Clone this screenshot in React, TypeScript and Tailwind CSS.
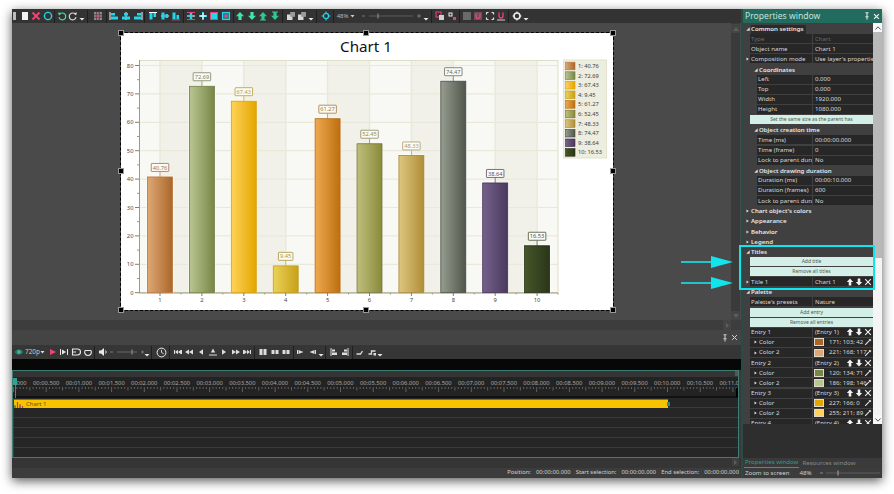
import type { ReactNode } from "react";

const font = "font-['Noto_Sans','Liberation_Sans',sans-serif]";

function I({ children, size = 10 }: { children: ReactNode; size?: number }) {
  return (
    <svg width={size} height={size} viewBox="0 0 10 10" className="block">
      {children}
    </svg>
  );
}

function Slot({ children }: { children: ReactNode }) {
  return <span className="w-[11.6px] shrink-0 flex justify-center items-center">{children}</span>;
}

const Caret = () => (
  <svg width="6" height="10" viewBox="0 0 6 10" className="block shrink-0">
    <path d="M0.5 7h5L3 9.5z" fill="#e8e8e8" />
  </svg>
);

const Up = ({ c = "#3ee6a8" }: { c?: string }) => <path d="M5 1L9 5.2H6.6V9H3.4V5.2H1z" fill={c} />;
const Down = ({ c = "#3ee6a8" }: { c?: string }) => <path d="M5 9L9 4.8H6.6V1H3.4V4.8H1z" fill={c} />;
const Cross = ({ c = "#f5f5f5", w = 1.6 }: { c?: string; w?: number }) => (
  <path d="M1.5 1.5L8.5 8.5M8.5 1.5L1.5 8.5" stroke={c} strokeWidth={w} fill="none" />
);

// alignment style buttons of the top toolbar
const Align = ({ v }: { v: number }) => {
  const bars: Record<number, ReactNode> = {
    0: (<><path d="M1 1v8" stroke="#fff" /><rect x="2" y="2" width="4" height="2.5" fill="#25d4ea" /><rect x="2" y="5.5" width="7" height="3" fill="#25d4ea" /></>),
    1: (<><path d="M5 1v8" stroke="#fff" /><rect x="3" y="2" width="4" height="2.5" fill="#25d4ea" /><rect x="1" y="5.5" width="8" height="3" fill="#25d4ea" /></>),
    2: (<><path d="M9 1v8" stroke="#fff" /><rect x="4" y="2" width="4" height="2.5" fill="#25d4ea" /><rect x="1" y="5.5" width="7" height="3" fill="#25d4ea" /></>),
    3: (<><path d="M1 1.5h8" stroke="#fff" /><rect x="1.5" y="2" width="3" height="6.5" fill="#25d4ea" /><rect x="5.5" y="2" width="2.5" height="4" fill="#25d4ea" /></>),
    4: (<><path d="M1 5h8" stroke="#fff" /><rect x="1.5" y="1.5" width="3" height="7" fill="#25d4ea" /><rect x="5.5" y="3" width="2.5" height="4" fill="#25d4ea" /></>),
    5: (<><path d="M1 8.8h8" stroke="#e0447a" /><rect x="1.5" y="1.5" width="3" height="6.5" fill="#25d4ea" /><rect x="5.5" y="4" width="2.5" height="4" fill="#25d4ea" /></>),
  };
  return <I>{bars[v]}</I>;
};

const Overlap = () => (
  <I>
    <rect x="1" y="3.5" width="5.5" height="5.5" fill="#d8d8d8" />
    <rect x="4.2" y="1" width="4.8" height="4.8" fill="#9a9a9a" />
  </I>
);

function Sep({ className }: { className: string }) {
  return <span className={`w-px h-[13px] bg-[#1f1f1f] shrink-0 ${className}`} />;
}

function TopToolbar() {
  return (
    <div className={`h-[14px] bg-[#333333] flex items-center shrink-0 overflow-hidden ${font}`}>
      <span className="w-[3px] ml-[1px] mr-[3px] h-[8px] bg-[#bdbdbd] shrink-0" />
      <Slot><I><rect x="2" y="1" width="6" height="8" fill="#f2f2f2" /></I></Slot>
      <Slot><I><Cross c="#f0436f" w={2} /></I></Slot>
      <Slot><I><circle cx="5" cy="5" r="3.6" stroke="#25d4ea" strokeWidth="1.4" fill="none" /></I></Slot>
      <Sep className="ml-[0px] mr-[1px]" />
      <Slot><I><path d="M2.5 3.5A3.4 3.4 0 1 1 2 6.2" stroke="#3ee6a8" strokeWidth="1.2" fill="none" /><path d="M1 1.5l3.4.6-2.4 2.5z" fill="#3ee6a8" /></I></Slot>
      <Slot><I><path d="M7.5 3.5A3.4 3.4 0 1 0 8 6.2" stroke="#d8d8d8" strokeWidth="1.2" fill="none" /><path d="M9 1.5l-3.4.6 2.4 2.5z" fill="#d8d8d8" /></I></Slot>
      <Caret />
      <Sep className="ml-[2px] mr-[4px]" />
      <Slot>
        <I>
          <path d="M1 1h8v8H1z" fill="#8c8c8c" />
          <path d="M3.7 1v8M6.3 1v8M1 3.7h8M1 6.3h8" stroke="#333" strokeWidth="0.7" />
          <rect x="3.6" y="3.6" width="2.8" height="2.8" fill="#f0436f" />
        </I>
      </Slot>
      <Sep className="ml-[2px] mr-[2px]" />
      <Slot><Align v={0} /></Slot>
      <Slot><Align v={1} /></Slot>
      <Slot><Align v={2} /></Slot>
      <Sep className="ml-[1px] mr-[2px]" />
      <Slot><Align v={3} /></Slot>
      <Slot><Align v={4} /></Slot>
      <Slot><Align v={5} /></Slot>
      <Sep className="ml-[1px] mr-[1px]" />
      <Slot><I><path d="M1 5h8" stroke="#fff" /><path d="M5 1v8" stroke="#25d4ea" strokeWidth="2.4" /><path d="M1 1.5h8M1 8.5h8" stroke="#e0447a" /></I></Slot>
      <Slot><I><path d="M1 5h8M5 1v8" stroke="#25d4ea" strokeWidth="2" /><path d="M2 5h6M5 2v6" stroke="#fff" /></I></Slot>
      <Slot><I><rect x="1.5" y="1.5" width="7" height="7" fill="#25d4ea" stroke="#e0447a" /></I></Slot>
      <Slot><I><rect x="1.5" y="1.5" width="7" height="7" fill="#1c7f8d" stroke="#25d4ea" strokeWidth="1.2" /><rect x="3.5" y="3.5" width="3" height="3" fill="#f0436f" /></I></Slot>
      <Sep className="ml-[1px] mr-[1px]" />
      <Slot><I><Up /></I></Slot>
      <Slot><I><Down /></I></Slot>
      <Slot><I><Up c="#2ec795" /><path d="M2 9h6" stroke="#2ec795" /></I></Slot>
      <Slot><I><Down c="#2ec795" /><path d="M2 1h6" stroke="#2ec795" /></I></Slot>
      <Sep className="ml-[1px] mr-[2px]" />
      <Slot><Overlap /></Slot>
      <Slot><Overlap /></Slot>
      <Caret />
      <Sep className="ml-[2px] mr-[3px]" />
      <Slot>
        <I>
          <circle cx="5" cy="5" r="2.6" stroke="#25d4ea" strokeWidth="1.3" fill="none" />
          <path d="M5 0.5v2.2M5 7.3v2.2M0.5 5h2.2M7.3 5h2.2" stroke="#25d4ea" strokeWidth="1.1" />
        </I>
      </Slot>
      <Sep className="ml-[1px] mr-[3px]" />
      <span className="text-[6px] leading-none text-[#b8b8b8] w-[13px] shrink-0">48%</span>
      <svg width="5" height="10" viewBox="0 0 5 10" className="shrink-0"><path d="M0.5 4h4L2.5 6.5z" fill="#cfcfcf" /></svg>
      <svg width="62" height="10" viewBox="0 0 62 10" className="shrink-0 ml-[6px]">
        <path d="M1 5h3M56 5h4M58 3v4" stroke="#777" />
        <path d="M8 5h44" stroke="#5c5c5c" />
        <path d="M17 2.5v5" stroke="#8a8a8a" strokeWidth="1.2" />
      </svg>
      <Caret />
      <Sep className="ml-[2px] mr-[3px]" />
      <Slot><I><rect x="1" y="1" width="5" height="5" fill="none" stroke="#e0447a" strokeWidth="1.1" /><rect x="4" y="4" width="5" height="5" fill="#cfcfcf" /></I></Slot>
      <Slot><I><rect x="2" y="2" width="3" height="3" fill="none" stroke="#f0f0f0" /><rect x="6" y="6" width="3" height="3" fill="#e0447a" /></I></Slot>
      <Sep className="ml-[1px] mr-[1px]" />
      <Slot><span className="block w-[8px] h-[8px] bg-[#6a6a6a]" /></Slot>
      <Slot><I><rect x="1" y="1" width="8" height="8" fill="#6b5060" /><path d="M3 2.5v3a2 2 0 0 0 4 0v-3" stroke="#f0436f" strokeWidth="1.2" fill="none" /></I></Slot>
      <Slot><I><path d="M1.5 1.5h2M6.5 1.5h2M1.5 8.5h2M6.5 8.5h2M1.5 1.5v2M8.5 1.5v2M1.5 6.5v2M8.5 6.5v2" stroke="#e8e8e8" strokeWidth="1.2" /></I></Slot>
      <Slot><I><path d="M3 1.5v3.5a2 2 0 0 0 4 0V1.5" stroke="#f0436f" strokeWidth="1.3" fill="none" /><path d="M1 9h8" stroke="#cfcfcf" /></I></Slot>
      <Sep className="ml-[1px] mr-[2px]" />
      <Slot>
        <I>
          <circle cx="5" cy="5" r="3" stroke="#ececec" strokeWidth="1.6" fill="none" />
          <path d="M5 0.5v1.5M5 8v1.5M0.5 5H2M8 5h1.5" stroke="#ececec" strokeWidth="1.2" />
        </I>
      </Slot>
      <Caret />
    </div>
  );
}

const bars = [
  { v: 40.76, a: "#dda875", b: "#ab672a", e: "#b9733a", t: "#9a7452" },
  { v: 72.69, a: "#bac692", b: "#788647", e: "#6f7d42", t: "#7a8260" },
  { v: 67.43, a: "#ffd359", b: "#e3a600", e: "#d89e05", t: "#b89a3a" },
  { v: 9.45, a: "#ebd257", b: "#c7a11a", e: "#bf9b18", t: "#a8963c" },
  { v: 61.27, a: "#efa94f", b: "#bd6f10", e: "#b56a10", t: "#a07840" },
  { v: 52.45, a: "#bfbf7c", b: "#8a8a3c", e: "#74743a", t: "#8a8a58" },
  { v: 48.33, a: "#dec680", b: "#b08e38", e: "#a38536", t: "#a89a68" },
  { v: 74.47, a: "#979e90", b: "#4f564a", e: "#454b40", t: "#666c60" },
  { v: 38.64, a: "#76608c", b: "#4a3a5e", e: "#3f3052", t: "#5a4e6a" },
  { v: 16.53, a: "#47562a", b: "#2a3518", e: "#232c12", t: "#4a5038" },
];

const X0 = 160;
const DX = 41.9;
const Y0 = 292.7;
const K = 2.84;

function Chart() {
  return (
    <svg viewBox="121 33 492 277" width="492" height="277" className="block" fontFamily="'Noto Sans', sans-serif">
      <defs>
        {bars.map((b, i) => (
          <linearGradient key={i} id={`bar${i}`} x1="0" x2="1" y1="0" y2="0">
            <stop offset="0" stopColor={b.a} />
            <stop offset="1" stopColor={b.b} />
          </linearGradient>
        ))}
      </defs>
      <text x="366" y="52" textAnchor="middle" fontSize="15.2" fill="#111">Chart 1</text>

      <rect x="139" y="60" width="419" height="232.7" fill="#f8f8f5" />
      {bars.map((_, i) =>
        i % 2 === 0 ? <rect key={i} x={X0 + i * DX} y="60" width={DX} height="232.7" fill="#f1f1e9" /> : null,
      )}
      {[...Array(8)].map((_, i) => (
        <line key={i} x1="139" x2="558" y1={Y0 - (i + 1) * 10 * K} y2={Y0 - (i + 1) * 10 * K} stroke="#e9e9da" strokeWidth="1.2" />
      ))}
      {bars.map((_, i) => (
        <line key={i} x1={X0 + i * DX} x2={X0 + i * DX} y1="60" y2="292.7" stroke="#e9e9da" strokeWidth="1.4" />
      ))}
      <rect x="139.5" y="60.5" width="418.5" height="232" fill="none" stroke="#dedec6" />

      {/* axes */}
      <line x1="139.5" x2="139.5" y1="60" y2="293" stroke="#9a9a86" />
      <line x1="139" x2="558" y1="293" y2="293" stroke="#9a9a86" />
      {[...Array(9)].map((_, i) => (
        <g key={i}>
          <line x1="135" x2="139" y1={Y0 - i * 10 * K} y2={Y0 - i * 10 * K} stroke="#7f7f70" />
          {i < 8 && <line x1="137" x2="139" y1={Y0 - (i + 0.5) * 10 * K} y2={Y0 - (i + 0.5) * 10 * K} stroke="#9a9a86" />}
          <text x="133.5" y={Y0 - i * 10 * K + 2} textAnchor="end" fontSize="5.8" fill="#444">{i * 10}</text>
        </g>
      ))}
      {bars.map((_, i) => (
        <g key={i}>
          <line x1={X0 + i * DX} x2={X0 + i * DX} y1="293" y2="296" stroke="#7f7f70" />
          <line x1={X0 + (i + 0.5) * DX} x2={X0 + (i + 0.5) * DX} y1="293" y2="294.5" stroke="#9a9a86" />
          <text x={X0 + i * DX} y="302" textAnchor="middle" fontSize="5.8" fill="#444">{i + 1}</text>
        </g>
      ))}

      {bars.map((b, i) => {
        const cx = X0 + i * DX;
        const top = Y0 - b.v * K;
        const label = String(b.v);
        const w = label.length > 4 ? 17.5 : 14.5;
        return (
          <g key={i}>
            <rect x={cx - 13.5} y={top - 1} width="27" height={Y0 - top + 1} fill="#ffffff" opacity="0.8" />
            <rect x={cx - 12.5} y={top} width="25" height={Y0 - top} fill={`url(#bar${i})`} stroke={b.e} strokeWidth="0.8" />
            <line x1={cx} x2={cx} y1={top - 5} y2={top} stroke={b.e} strokeWidth="0.8" opacity="0.7" />
            <rect x={cx - w / 2} y={top - 13.5} width={w} height="8" fill="#fbfbf8" stroke={b.t} strokeWidth="0.8" rx="0.5" />
            <text x={cx} y={top - 7.4} textAnchor="middle" fontSize="5.7" fill={b.t}>{label}</text>
          </g>
        );
      })}

      {/* legend */}
      <rect x="563.5" y="60" width="43" height="98" fill="#edede0" stroke="#e3e3d0" />
      {bars.map((b, i) => {
        const y = 66 + i * 9.6;
        return (
          <g key={i}>
            <rect x="565.5" y={y - 3.8} width="9.5" height="7.6" fill={`url(#bar${i})`} stroke={b.e} strokeWidth="0.6" />
            <text x="578" y={y + 2} fontSize="5.7" fill="#3c3c3c">{`${i + 1}: ${b.v}`}</text>
          </g>
        );
      })}
    </svg>
  );
}

const Handle = ({ className }: { className: string }) => (
  <span className={`absolute w-[4px] h-[4px] bg-black outline-1 outline-[#999] ${className}`} />
);

function CanvasArea() {
  return (
    <div className="flex-1 flex min-h-0 bg-[#4a4a4a]">
      <div className="flex-1 pl-[109px] pt-[10px]">
        <div className="relative w-[492px] h-[277px] bg-white outline-1 outline-dashed outline-black">
          <Chart />
          <Handle className="-left-[2px] -top-[2px]" />
          <Handle className="left-[243px] -top-[2px]" />
          <Handle className="-right-[2px] -top-[2px]" />
          <Handle className="-left-[2px] top-[136px]" />
          <Handle className="-right-[2px] top-[136px]" />
          <Handle className="-left-[2px] -bottom-[2px]" />
          <Handle className="left-[243px] -bottom-[2px]" />
          <Handle className="-right-[2px] -bottom-[2px]" />
        </div>
      </div>
      <div className="w-[9px] mr-px bg-[#3a3a3a] flex flex-col justify-between shrink-0">
        <div className="h-[9px] mt-px bg-[#444] flex items-center justify-center">
          <svg width="6" height="4" viewBox="0 0 6 4"><path d="M0 4l3-4 3 4z" fill="#5e5e5e" /></svg>
        </div>
        <div className="h-[9px] bg-[#444] flex items-center justify-center">
          <svg width="6" height="4" viewBox="0 0 6 4"><path d="M0 0l3 4 3-4z" fill="#5e5e5e" /></svg>
        </div>
      </div>
    </div>
  );
}

function TimelineToolbar() {
  return (
    <div className={`h-[14px] bg-[#363636] flex items-center shrink-0 overflow-hidden ${font}`}>
      <span className="ml-[3px]"><I size={8}><circle cx="5" cy="5" r="2.2" fill="#2fc7a2" /><path d="M0.5 5Q5 0 9.5 5Q5 10 0.5 5z" fill="none" stroke="#2fc7a2" /></I></span>
      <span className="text-[6.4px] leading-none text-[#c8c8c8] ml-[2px] w-[15px] shrink-0">720p</span>
      <svg width="5" height="10" viewBox="0 0 5 10" className="shrink-0"><path d="M0.5 4h4L2.5 6.5z" fill="#ddd" /></svg>
      <span className="w-[2px]" />
      <Slot><I><path d="M2 2l6 3-6 3z" fill="#f0436f" /></I></Slot>
      <Slot><I><path d="M1.5 2v6M8.5 2v6" stroke="#e8e8e8" /><path d="M3 2.5l4 2.5-4 2.5z" fill="#e8e8e8" /></I></Slot>
      <Slot><I><path d="M1.5 2v6h5a3 3 0 0 0 0-6z" stroke="#e8e8e8" fill="none" strokeWidth="1.1" /><path d="M1 5h4" stroke="#e8e8e8" /></I></Slot>
      <Slot><I><path d="M2 3.5A3.4 3.4 0 1 0 8 3.5" stroke="#e8e8e8" fill="none" strokeWidth="1.1" /><path d="M2 3.5h6" stroke="#e8e8e8" /></I></Slot>
      <Sep className="ml-[1px] mr-[2px]" />
      <Slot><I><path d="M1 3.5h2l3-2.5v8l-3-2.5H1z" fill="#e8e8e8" /><path d="M7.5 3.5a2 2 0 0 1 0 3" stroke="#e8e8e8" fill="none" /></I></Slot>
      <svg width="35" height="10" viewBox="0 0 35 10" className="shrink-0">
        <path d="M1 5h3M32 5h3M33.5 3.5v3" stroke="#777" />
        <path d="M8 5h20" stroke="#666" />
        <path d="M23 2.5v5" stroke="#8e8e8e" strokeWidth="1.2" />
      </svg>
      <Caret />
      <Sep className="ml-[1px] mr-[2px]" />
      <span className="ml-[2px] mr-[1px]">
        <I size={11}>
          <circle cx="5" cy="5" r="4" stroke="#eee" strokeWidth="0.9" fill="none" />
          <path d="M5 2.5V5l2 1.2" stroke="#eee" strokeWidth="0.8" fill="none" />
        </I>
      </span>
      <Sep className="ml-[1px] mr-[2px]" />
      <Slot><I><path d="M1.5 3v4M8.5 3v4" stroke="#ddd" /><path d="M2 5l3-2.2v4.4zM5 5l3-2.2v4.4z" fill="#ddd" /></I></Slot>
      <Slot><I><path d="M1 5l4-2.6v5.2zM5 5l4-2.6v5.2z" fill="#ddd" /></I></Slot>
      <Slot><I><path d="M3 5l4-2.8v5.6z" fill="#ddd" /></I></Slot>
      <Slot><I><path d="M5 1.5l2.2 4H2.8z" fill="#ddd" /><path d="M1 8h8" stroke="#ddd" /></I></Slot>
      <Slot><I><path d="M7 5l-4-2.8v5.6z" fill="#ddd" /></I></Slot>
      <Slot><I><path d="M9 5L5 2.4v5.2zM5 5L1 2.4v5.2z" fill="#ddd" /></I></Slot>
      <Slot><I><path d="M1.5 3v4M8.5 3v4" stroke="#ddd" /><path d="M8 5L5 2.8v4.4zM5 5L2 2.8v4.4z" fill="#ddd" /></I></Slot>
      <Sep className="ml-[1px] mr-[2px]" />
      <Slot><I><rect x="1.5" y="2" width="3" height="6" fill="#ddd" /><rect x="5.5" y="2" width="3" height="6" fill="#ddd" /></I></Slot>
      <Slot><I><rect x="1.5" y="3" width="3" height="4" fill="#ddd" /><rect x="5.5" y="3" width="3" height="4" fill="#ddd" /></I></Slot>
      <Slot><I><rect x="1.5" y="3" width="3" height="4" fill="#ddd" /><rect x="5.5" y="3" width="3" height="4" fill="#ddd" /></I></Slot>
      <Sep className="ml-[1px] mr-[1px]" />
      <Slot><I><path d="M1.5 3v4" stroke="#ddd" /><path d="M2.5 3l5 2-5 2z" fill="#ddd" /></I></Slot>
      <Slot><I><path d="M8.5 3v4" stroke="#ddd" /><path d="M7.5 3l-5 2 5 2z" fill="#ddd" /></I></Slot>
      <Caret />
      <Sep className="ml-[1px] mr-[2px]" />
      <Slot><I><path d="M2 1v8" stroke="#ddd" /><rect x="3" y="2.5" width="3" height="2" fill="#ddd" /><rect x="3" y="5.5" width="5" height="2.5" fill="#ddd" /></I></Slot>
      <Slot><I><path d="M8 1v8" stroke="#ddd" /><rect x="4" y="2.5" width="3" height="2" fill="#ddd" /><rect x="2" y="5.5" width="5" height="2.5" fill="#ddd" /></I></Slot>
      <Sep className="ml-[1px] mr-[1px]" />
      <Slot><I><path d="M1.5 7h4l2-3" stroke="#ddd" strokeWidth="1.3" fill="none" /></I></Slot>
      <Slot><I><path d="M1.5 7h3V4h4" stroke="#ddd" strokeWidth="1.3" fill="none" /><rect x="6.5" y="6" width="2.5" height="2.5" fill="#ddd" /></I></Slot>
      <Caret />
    </div>
  );
}

function Ruler() {
  const labels = [...Array(23)].map((_, i) => {
    const ms = i * 500;
    const s = Math.floor(ms / 1000);
    return `00:${String(s).padStart(2, "0")}.${ms % 1000 === 0 ? "000" : "500"}`;
  });
  return (
    <div className="h-[21px] bg-[#232323] overflow-hidden shrink-0 border-b-2 border-[#111]">
      <div className="flex -ml-[15.85px] pt-[1.5px]">
        {labels.map((l) => (
          <span key={l} className="w-[32.7px] shrink-0 text-center text-[5.8px] leading-[8px] text-[#a8a8a8]">{l}</span>
        ))}
      </div>
      <svg width="727" height="5" className="block">
        {[...Array(230)].map((_, i) => {
          const x = 0.5 + (i * 32.7) / 10;
          const h = i % 10 === 0 ? 5 : i % 5 === 0 ? 3.5 : 2;
          return <line key={i} x1={x} x2={x} y1="0" y2={h} stroke="#8a8a8a" strokeWidth="0.6" />;
        })}
      </svg>
    </div>
  );
}

function Timeline() {
  return (
    <div className={`shrink-0 ${font}`}>
      <div className="h-[15px] bg-[#444444] flex items-center justify-end pr-[3px] gap-[2px]">
        <I size={8}><path d="M3 1h4M5 1v5M3 6h4M5 6v3.5" stroke="#c8c8c8" strokeWidth="1.4" /></I>
        <I size={7}><Cross c="#d8d8d8" w={1.4} /></I>
      </div>
      <TimelineToolbar />
      <div className="h-[11px] bg-[#070707]" />
      <div className="relative h-[88px] mr-[2px] border-y border-x border-[#3f7d74] bg-[#333] flex flex-col">
        <div className="h-[6px] bg-[#353535] shrink-0" />
        <Ruler />
        <div className="flex-1 bg-[#262626] flex flex-col relative border-l border-[#8a1c1c]">
          <div className="h-[10px] border-b border-[#3a3a3a] flex">
            <div className="w-[654px] h-[9px] mt-[1px] bg-[#f7c200] border-t border-[#1f8f88] flex items-center relative">
              <svg width="11" height="8" viewBox="0 0 11 8" className="shrink-0">
                <path d="M1 8V5M3.5 8V2M6 8V4M8.5 8V6" stroke="#d83a2a" strokeWidth="1.2" />
                <path d="M1 8V6M6 8V6" stroke="#1f8f88" strokeWidth="1.2" />
              </svg>
              <span className="text-[6px] leading-none text-[#6b5200] ml-[1px]">Chart 1</span>
              <span className="absolute -right-[2px] top-[2px] w-[3px] h-[4px] bg-[#1f8f88]" />
            </div>
          </div>
          <div className="h-[10px] border-b border-[#3a3a3a]" />
          <div className="h-[10px] border-b border-[#3a3a3a]" />
          <div className="h-[10px] border-b border-[#3a3a3a]" />
          <div className="h-[10px] border-b border-[#3a3a3a]" />
        </div>
        {/* playhead and the little end markers of the ruler */}
        <span className="absolute left-0 top-[7px] w-[4px] h-[7px] bg-[#2ba596]" />
        <span className="absolute left-[2px] top-[14px] w-px h-[13px] bg-[#777]" />
        <span className="absolute right-0 top-0 w-[3px] h-[5px] bg-[#555]" />
        <span className="absolute right-0 top-[17px] w-[2px] h-[9px] bg-black" />
      </div>
    </div>
  );
}

function Status() {
  return (
    <div className={`shrink-0 ${font}`}>
      <div className="h-[10px] bg-[#353535] flex justify-end pr-[2px]">
        <span className="w-[7px] h-[8px] bg-[#3f3f3f] flex items-center justify-center">
          <svg width="3" height="5" viewBox="0 0 3 5"><path d="M0 0l3 2.5L0 5z" fill="#5e5e5e" /></svg>
        </span>
      </div>
      <div className="h-[10px] bg-[#3c3c3c] flex items-center justify-end pr-[2px] text-[5.85px] leading-none text-[#d0d0d0]">
        <span>Position:</span>
        <span className="ml-[5px]">00:00:00.000</span>
        <span className="ml-[5px]">Start selection:</span>
        <span className="ml-[5px]">00:00:00.000</span>
        <span className="ml-[5px]">End selection:</span>
        <span className="ml-[5px]">00:00:00.000</span>
      </div>
    </div>
  );
}

const Open = () => (
  <svg width="4" height="4" viewBox="0 0 4 4" className="shrink-0"><path d="M0.3 3.7H3.7V0.3z" fill="#e0e0e0" /></svg>
);
const Closed = () => (
  <svg width="3" height="4" viewBox="0 0 3 4" className="shrink-0"><path d="M0.5 0.5L2.8 2L0.5 3.5z" fill="#e0e0e0" /></svg>
);

const rowH = "h-[10.13px] shrink-0 flex leading-none";

function Head({ label, open = true, level = 0, boxed = false }: { label: string; open?: boolean; level?: number; boxed?: boolean }) {
  return (
    <div className={`${rowH} items-center font-semibold text-[#e8e8e8] ${level === 0 ? "pl-[3px]" : "pl-[11px]"}`}>
      <span className="w-[5px] flex items-center shrink-0">{open ? <Open /> : <Closed />}</span>
      <span className={`h-[9px] flex items-center pr-[2px] ${boxed ? "bg-[#2a2a2a]" : ""}`}>{label}</span>
    </div>
  );
}

function Prop({ k, v, level = 1, dim = false, arrow = false, sub = false, tools }: { k: string; v?: ReactNode; level?: number; dim?: boolean; arrow?: boolean; sub?: boolean; tools?: ReactNode }) {
  return (
    <div className={`${rowH} items-start ${dim ? "text-[#6a6a6a]" : "text-[#d8d8d8]"}`}>
      <div className="w-[7px] shrink-0 pl-[3px] pt-[3px]">{arrow && level === 1 ? <Closed /> : null}</div>
      <div className={`${level === 2 ? "ml-[7px] w-[55px]" : "w-[62px]"} mr-px h-[9px] bg-[#272727] flex items-center overflow-hidden whitespace-nowrap pl-px`}>
        {sub && <span className="ml-[3px] mr-[2px] flex items-center"><Closed /></span>}
        {k}
      </div>
      <div className="flex-1 h-[9px] bg-[#272727] flex items-center overflow-hidden whitespace-nowrap pl-[2px] relative">
        {v}
        {tools}
      </div>
    </div>
  );
}

function Btn({ label }: { label: string }) {
  return (
    <div className={rowH}>
      <div className="ml-[7px] w-[123px] h-[9px] bg-[#d4efe8] text-[#4a5a56] text-[5px] flex items-center justify-center">{label}</div>
    </div>
  );
}

const EntryTools = () => (
  <span className="absolute right-0 top-0 h-[9px] flex items-center gap-[1px] pr-px">
    <I size={8}><path d="M5 0.5L9 5H6.6V9.5H3.4V5H1z" fill="#f2f2f2" /></I>
    <I size={8}><path d="M5 9.5L9 5H6.6V0.5H3.4V5H1z" fill="#f2f2f2" /></I>
    <I size={8}><Cross w={1.3} /></I>
  </span>
);

const Pipette = () => (
  <span className="absolute right-[1px] top-[0.5px]">
    <I size={8}><path d="M1.5 8.5L6 4" stroke="#e8e8e8" strokeWidth="1.3" /><path d="M5.5 2.5L7.5 0.8 9.2 2.5 7.5 4.5z" fill="#e8e8e8" /></I>
  </span>
);

function ColorVal({ c, t }: { c: string; t: string }) {
  return (
    <>
      <span className="w-[10px] h-[8px] shrink-0 border border-[#e2d9c8] -ml-px" style={{ backgroundColor: c }} />
      <span className="ml-[5px]">{t}</span>
      <Pipette />
    </>
  );
}

function Panel() {
  return (
    <div className={`w-[141px] shrink-0 flex flex-col bg-[#2e2e2e] border-l-2 border-[#2b4a45] ${font}`}>
      <div className="h-[14px] bg-[#226c5f] flex items-center pl-[2px] pr-[2px] shrink-0">
        <span className="text-[8.6px] leading-none text-[#c9e0da] flex-1">Properties window</span>
        <I size={8}><path d="M3 1h4M5 1v5M3 6h4M5 6v3.5" stroke="#e2e2e2" strokeWidth="1.4" /></I>
        <span className="ml-[2px]"><I size={7}><Cross w={1.6} /></I></span>
      </div>
      <div className="h-[401px] flex shrink-0 bg-[#404040]">
        <div className="flex-1 min-w-0 flex flex-col overflow-hidden pt-px text-[6.1px]">
          <Head label="Common settings" boxed />
          <Prop k="Type" v="Chart" dim />
          <Prop k="Object name" v="Chart 1" />
          <Prop k="Composition mode" v="Use layer's properties" arrow />
          <Head label="Coordinates" level={1} />
          <Prop k="Left" v="0.000" level={2} />
          <Prop k="Top" v="0.000" level={2} />
          <Prop k="Width" v="1920.000" level={2} />
          <Prop k="Height" v="1080.000" level={2} />
          <Btn label="Set the same size as the parent has" />
          <Head label="Object creation time" level={1} />
          <Prop k="Time (ms)" v="00:00:00.000" level={2} />
          <Prop k="Time (frame)" v="0" level={2} />
          <Prop k="Lock to parent dura" v="No" level={2} />
          <Head label="Object drawing duration" level={1} />
          <Prop k="Duration (ms)" v="00:00:10.000" level={2} />
          <Prop k="Duration (frames)" v="600" level={2} />
          <Prop k="Lock to parent dura" v="No" level={2} />
          <Head label="Chart object's colors" open={false} />
          <Head label="Appearance" open={false} />
          <Head label="Behavior" open={false} />
          <Head label="Legend" open={false} />
          <Head label="Titles" />
          <Btn label="Add title" />
          <Btn label="Remove all titles" />
          <Prop k="Title 1" v="Chart 1" arrow tools={<EntryTools />} />
          <Head label="Palette" />
          <Prop k="Palette's presets" v="Nature" />
          <Btn label="Add entry" />
          <Btn label="Remove all entries" />
          <Prop k="Entry 1" v="(Entry 1)" tools={<EntryTools />} />
          <Prop k="Color" sub v={<ColorVal c="#ab672a" t="171; 103; 42" />} />
          <Prop k="Color 2" sub v={<ColorVal c="#dda875" t="221; 168; 117" />} />
          <Prop k="Entry 2" v="(Entry 2)" tools={<EntryTools />} />
          <Prop k="Color" sub v={<ColorVal c="#788647" t="120; 134; 71" />} />
          <Prop k="Color 2" sub v={<ColorVal c="#bac692" t="186; 198; 146" />} />
          <Prop k="Entry 3" v="(Entry 3)" tools={<EntryTools />} />
          <Prop k="Color" sub v={<ColorVal c="#e3a600" t="227; 166; 0" />} />
          <Prop k="Color 2" sub v={<ColorVal c="#ffd359" t="255; 211; 89" />} />
          <Prop k="Entry 4" v="(Entry 4)" tools={<EntryTools />} />
        </div>
        <div className="w-[9px] shrink-0 bg-[#f4f4f4] flex flex-col">
          <div className="h-[9px] bg-[#f8f8f8] flex items-center justify-center shrink-0">
            <svg width="6" height="4" viewBox="0 0 6 4"><path d="M0.5 3.5L3 0.8 5.5 3.5" stroke="#555" fill="none" /></svg>
          </div>
          <div className="h-[226px] bg-[#b9b9b9] shrink-0" />
          <div className="flex-1" />
          <div className="h-[9px] bg-[#f8f8f8] flex items-center justify-center shrink-0">
            <svg width="6" height="4" viewBox="0 0 6 4"><path d="M0.5 0.5L3 3.2 5.5 0.5" stroke="#555" fill="none" /></svg>
          </div>
        </div>
      </div>
      <div className="flex-1 bg-[#2e2e2e]" />
      <div className="h-[10px] bg-[#3a3a3a] flex items-stretch text-[6.1px] leading-none shrink-0 pl-[1px]">
        <span className="px-[1px] flex items-center text-[#2f9f88] border-b border-[#2f9f88]">Properties window</span>
        <span className="ml-[3px] flex items-center text-[#8a8a8a]">Resources window</span>
      </div>
      <div className="h-[10px] bg-[#3c3c3c] flex items-center text-[6.1px] leading-none text-[#d0d0d0] shrink-0 pl-[2px]">
        <span>Zoom to screen</span>
        <span className="ml-[10px]">48%</span>
        <svg width="60" height="10" viewBox="0 0 60 10" className="ml-[8px] shrink-0">
          <path d="M0 5h3" stroke="#888" />
          <path d="M6 5h54" stroke="#5c5c5c" />
          <path d="M18 2.5v5" stroke="#9a9a9a" strokeWidth="1.2" />
        </svg>
      </div>
    </div>
  );
}

export default function App() {
  return (
    <div className="relative w-[894px] h-[494px] bg-white overflow-hidden">
      <div className="relative ml-[12px] top-[9px] w-[870px] h-[469px] flex shadow-[0_3px_10px_rgba(0,0,0,0.65)]">
        <div className="w-[729px] shrink-0 flex flex-col bg-[#3a3a3a]">
          <TopToolbar />
          <CanvasArea />
          <div className="h-[10px] bg-[#3d3d3d] shrink-0 flex justify-end pr-[10px]">
            <span className="w-[8px] h-[10px] bg-[#444] flex items-center justify-center">
              <svg width="3" height="5" viewBox="0 0 3 5"><path d="M0 0l3 2.5L0 5z" fill="#5e5e5e" /></svg>
            </span>
          </div>
          <Timeline />
          <Status />
        </div>
        <Panel />
      </div>

      {/* highlight added on top of the screenshot */}
      <div className="absolute left-[739px] top-[245px] w-[136px] h-[45px] border-2 border-[#12e4ee]" />
      <svg className="absolute left-[680px] top-[254px]" width="56" height="36" viewBox="0 0 56 36">
        <path d="M1 8h32" stroke="#12e4ee" strokeWidth="1.6" />
        <path d="M31 2l22 6-22 6z" fill="#12e4ee" />
        <path d="M1 29h32" stroke="#12e4ee" strokeWidth="1.6" />
        <path d="M31 23l22 6-22 6z" fill="#12e4ee" />
      </svg>
    </div>
  );
}
